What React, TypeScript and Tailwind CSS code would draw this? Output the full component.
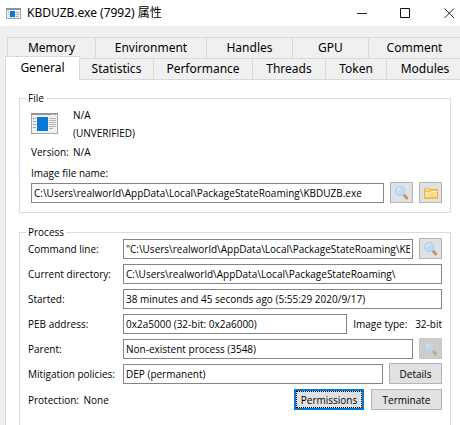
import { useId, type ReactNode } from "react";

const uiFont = "font-['Noto_Sans','Noto_Sans_CJK_SC',sans-serif]";
const bodyFont = "font-['Open_Sans','Noto_Sans_CJK_SC',sans-serif]";

function ProgramIcon({ className }: { className: string }) {
  return (
    <svg viewBox="0 0 27 21" className={className} aria-hidden="true" shapeRendering="crispEdges">
      <rect x="0" y="0" width="27" height="21" fill="#a3a7a9" />
      <rect x="0" y="0" width="27" height="2" fill="#8f9497" />
      <rect x="1" y="2" width="25" height="18" fill="#f1f1f1" />
      <path d="M21 1h1M23 1h1M25 1h1" stroke="#e8e8e8" />
      <rect x="6" y="4" width="11" height="14" fill="#0a78d6" />
      <path d="M2 5.5h3M2 8.5h3M2 11.5h3M2 14.5h3" stroke="#a3a3a3" />
      <path d="M18 5.5h7M18 7.5h7M18 9.5h7M18 11.5h7M18 13.5h7M18 15.5h4" stroke="#b4b4b4" />
    </svg>
  );
}

function TitleIcon() {
  return (
    <svg viewBox="0 0 15 11" className="h-[11px] w-[15px]" aria-hidden="true" shapeRendering="crispEdges">
      <rect width="15" height="11" fill="#a3a7a9" />
      <rect width="15" height="2" fill="#8f9497" />
      <rect x="1" y="2" width="13" height="8" fill="#eeeeee" />
      <rect x="4" y="3" width="5" height="6" fill="#0a78d6" />
      <path d="M2 4.5h1M2 6.5h1M10 4.5h3M10 6.5h3M10 8.5h2" stroke="#a9b4ba" />
    </svg>
  );
}

function Magnifier() {
  return (
    <svg viewBox="0 0 16 16" className="size-4 shrink-0" aria-hidden="true">
      <path d="M9 9l2 2" stroke="#8e9aa6" strokeWidth="1.6" />
      <path d="M10.8 10.8l2 2.2" stroke="#c08a4e" strokeWidth="2.8" strokeLinecap="round" />
      <path d="M11 10.6l1.8 1.9" stroke="#e6bd86" strokeWidth="1" strokeLinecap="round" />
      <circle cx="6.2" cy="6" r="4.6" fill="#bcdcf8" stroke="#b2cdf0" strokeWidth="1.2" />
      <path d="M3.4 6.1a2.9 2.9 0 0 1 2.9-2.9" stroke="#e0f0ff" strokeWidth="1.4" fill="none" />
    </svg>
  );
}

function Folder() {
  return (
    <svg viewBox="0 0 16 16" className="size-4 shrink-0" aria-hidden="true">
      <path d="M1.5 13v-9l.5-.5h4l1 1h7.5v8.5z" fill="#f0c95c" stroke="#e5b548" />
      <path d="M2.5 4.5h3.5" stroke="#fff3c4" />
      <path d="M2 8h5l1.5-1.5h5.5v6h-12z" fill="#fbdf86" />
      <path d="M2 8h5l1.5-1.5h5.5" stroke="#fff6cf" fill="none" />
      <path d="M1 13h14" stroke="#e3ad35" />
    </svg>
  );
}

function IconButton({ label, disabled, children }: { label: string; disabled?: boolean; children: ReactNode }) {
  return (
    <button
      type="button"
      aria-label={label}
      disabled={disabled}
      className="flex h-[21px] w-[23px] shrink-0 items-center justify-center border border-[#b4b4b4] bg-[#e1e1e1] disabled:border-[#c8c8c8] disabled:bg-[#cccccc] disabled:*:opacity-60"
    >
      {children}
    </button>
  );
}

function TextField({ id, value }: { id: string; value: string }) {
  return (
    <input
      id={id}
      type="text"
      readOnly
      defaultValue={value}
      className="h-5 min-w-0 flex-1 border border-[#858585] bg-white px-[2px] outline-none"
    />
  );
}

function Row({ label, value, children }: { label: string; value: string; children?: ReactNode }) {
  const id = useId();
  return (
    <div className="flex h-[21px] items-center gap-[6px]">
      <label htmlFor={id} className="w-[89px] shrink-0 whitespace-nowrap">
        {label}
      </label>
      <TextField id={id} value={value} />
      {children}
    </div>
  );
}

function PushButton({ children, width, focused }: { children: string; width: string; focused?: boolean }) {
  return (
    <button
      type="button"
      className={`h-[21px] shrink-0 bg-[#e1e1e1] ${width} ${focused ? "border-2 border-[#0078d7]" : "border border-[#b4b4b4]"}`}
    >
      <span className={`flex h-full items-center justify-center ${focused ? "border border-dotted border-black" : ""}`}>
        {children}
      </span>
    </button>
  );
}

const backTabs = [
  { name: "Memory", width: "w-[88px]" },
  { name: "Environment", width: "w-[111px]" },
  { name: "Handles", width: "w-[86px]" },
  { name: "GPU", width: "w-[76px]" },
  { name: "Comment", width: "min-w-[92px] flex-1" },
];

const frontTabs = [
  { name: "Statistics", width: "w-[74px]" },
  { name: "Performance", width: "w-[99px]" },
  { name: "Threads", width: "w-[73px]" },
  { name: "Token", width: "w-[61px]" },
  { name: "Modules", width: "min-w-[77px] flex-1" },
];

function Tab({ name, width }: { name: string; width: string }) {
  return (
    <button
      type="button"
      role="tab"
      aria-selected={false}
      className={`h-[21px] shrink-0 border-t border-l border-[#d9d9d9] bg-[#f0f0f0] ${width}`}
    >
      {name}
    </button>
  );
}

export default function App() {
  const imageId = useId();
  return (
    <div
      className={`flex min-h-screen flex-col overflow-x-hidden bg-[#f0f0f0] text-black ${bodyFont} text-[10px] leading-[14px]`}
    >
      <header className={`flex h-[26px] items-center bg-white pl-[6px] ${uiFont} text-[12px]`}>
        <TitleIcon />
        <h1 className="ml-[6px] flex-1">KBDUZB.exe (7992) 属性</h1>
        <button type="button" aria-label="Minimize" className="flex h-5 w-[43px] items-center justify-center">
          <svg viewBox="0 0 11 11" className="size-[11px]" aria-hidden="true">
            <path d="M0 5.5h10" stroke="#222" />
          </svg>
        </button>
        <button type="button" aria-label="Maximize" className="flex h-5 w-[43px] items-center justify-center">
          <svg viewBox="0 0 11 11" className="size-[11px]" aria-hidden="true">
            <path d="M.5 .5h9v9h-9z" stroke="#111" fill="none" />
          </svg>
        </button>
        <button type="button" aria-label="Close" className="flex h-5 w-[33px] items-center justify-end pr-[5px]">
          <svg viewBox="0 0 11 11" className="size-[11px]" aria-hidden="true">
            <path d="M.5 .5l9.5 9.5M10 .5l-9.5 9.5" stroke="#222" fill="none" />
          </svg>
        </button>
      </header>

      <div role="tablist" className={`pt-[11px] pl-[5px] ${uiFont} text-[12px]`}>
        <div className="flex pl-[2px]">
          {backTabs.map((tab) => (
            <Tab key={tab.name} {...tab} />
          ))}
        </div>
        <div className="flex items-end">
          <button
            type="button"
            role="tab"
            aria-selected={true}
            className="relative z-10 -mt-[2px] -mb-px h-6 w-[75px] shrink-0 border-x border-t border-[#d9d9d9] bg-white pb-[2px]"
          >
            General
          </button>
          <div className="-ml-px flex flex-1">
            {frontTabs.map((tab) => (
              <Tab key={tab.name} {...tab} />
            ))}
          </div>
        </div>
      </div>

      <main className="ml-[5px] flex flex-1 flex-col border-t border-l border-[#d9d9d9] bg-white pt-[11px] pr-[9px] pl-[13px]">
        <fieldset className="border border-[#dcdcdc] px-2 pb-[9px] pl-[11px]">
          <legend className="-ml-[5px] px-[2px]">File</legend>
          <div className="flex gap-[15px]">
            <ProgramIcon className="mt-2 h-[21px] w-[27px]" />
            <div className="pt-[3px]">
              <p>N/A</p>
              <p className="mt-1">(UNVERIFIED)</p>
            </div>
          </div>
          <div className="mt-[5px] flex">
            <span className="w-[42px]">Version:</span>
            <span>N/A</span>
          </div>
          <label htmlFor={imageId} className="mt-[7px] block">
            Image file name:
          </label>
          <div className="mt-[2px] flex items-center gap-[6px]">
            <TextField id={imageId} value={"C:\\Users\\realworld\\AppData\\Local\\PackageStateRoaming\\KBDUZB.exe"} />
            <IconButton label="Inspect image file">
              <Magnifier />
            </IconButton>
            <IconButton label="Open file location">
              <Folder />
            </IconButton>
          </div>
        </fieldset>

        <fieldset className="mt-3 flex-1 border border-b-0 border-[#dcdcdc] px-2">
          <legend className="-ml-[2px] px-[2px]">Process</legend>
          <div className="-mt-px flex flex-col gap-1">
            <Row label="Command line:" value={'"C:\\Users\\realworld\\AppData\\Local\\PackageStateRoaming\\KBDUZB.exe"'}>
              <IconButton label="Show command line">
                <Magnifier />
              </IconButton>
            </Row>
            <Row label="Current directory:" value={"C:\\Users\\realworld\\AppData\\Local\\PackageStateRoaming\\"} />
            <Row label="Started:" value="38 minutes and 45 seconds ago (5:55:29 2020/9/17)" />
            <Row label="PEB address:" value="0x2a5000 (32-bit: 0x2a6000)">
              <span className="w-[56px] whitespace-nowrap">Image type:</span>
              <span className="whitespace-nowrap">32-bit</span>
            </Row>
            <Row label="Parent:" value="Non-existent process (3548)">
              <IconButton label="Inspect parent" disabled>
                <Magnifier />
              </IconButton>
            </Row>
            <Row label="Mitigation policies:" value="DEP (permanent)">
              <PushButton width="w-[53px]">Details</PushButton>
            </Row>
          </div>
          <div className="mt-[5px] flex items-center gap-[7px]">
            <span className="flex-1">
              Protection: <span className="ml-[2px]">None</span>
            </span>
            <PushButton width="w-[70px]" focused>
              Permissions
            </PushButton>
            <PushButton width="w-[71px]">Terminate</PushButton>
          </div>
        </fieldset>
      </main>
    </div>
  );
}
